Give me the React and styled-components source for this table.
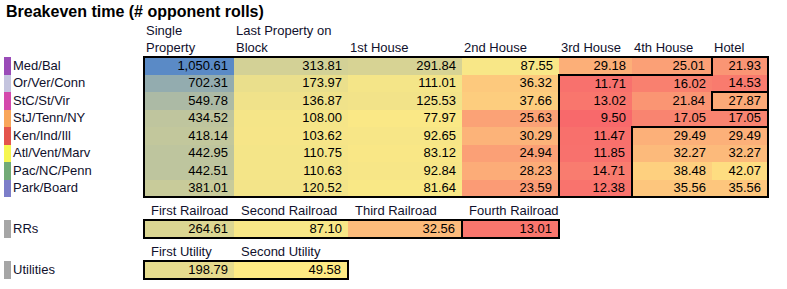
import React from 'react';
import styled, { createGlobalStyle } from 'styled-components';

const GlobalStyle = createGlobalStyle`
  html, body {
    margin: 0;
    padding: 0;
    background: #fff;
  }
  body {
    font-family: "Liberation Sans", Arial, sans-serif;
    font-size: 13px;
    color: #000;
  }
`;

const Sheet = styled.table`
  border-collapse: collapse;
  table-layout: fixed;
  width: 768px;
`;

const Col = styled.col`
  width: ${p => p.$w}px;
`;

const Row = styled.tr`
  height: ${p => p.$h}px;
`;

const TitleCell = styled.td`
  padding: 3px 0 0 6px;
  font-size: 16px;
  font-weight: bold;
  line-height: 18px;
  white-space: nowrap;
  vertical-align: top;
`;

const HeadCell = styled.td`
  padding: 0 0 0 ${p => p.$indent}px;
  line-height: 17px;
  vertical-align: bottom;
  white-space: nowrap;
  color: #10102c;
`;

const Blank = styled.td`
  padding: 0;
  line-height: 14px;
`;

const Swatch = styled.td`
  padding: 0;
  line-height: 14px;
  background: ${p => p.$color};
`;

const Label = styled.td`
  padding: 0 0 0 2px;
  line-height: 14px;
  white-space: nowrap;
  color: #10102c;
`;

const line = '2px solid #000';

const Num = styled.td`
  padding: 0 6px 0 0;
  text-align: right;
  line-height: 14px;
  white-space: nowrap;
  background: ${p => p.$bg};
  border-top: ${p => (p.$t ? line : 'none')};
  border-bottom: ${p => (p.$b ? line : 'none')};
  border-left: ${p => (p.$l ? line : 'none')};
  border-right: ${p => (p.$r ? line : 'none')};
`;

// Excel red - yellow - blue colour scale
const RED = [248, 105, 107];
const YEL = [255, 235, 132];
const BLUE = [90, 138, 198];
const MIN = 9.5;
const MID = 46;
const MAX = 1050.61;

const heat = v => {
  const [a, b, t] = v < MID
    ? [RED, YEL, (v - MIN) / (MID - MIN)]
    : [YEL, BLUE, (v - MID) / (MAX - MID)];
  const k = Math.max(0, Math.min(1, t));
  const c = a.map((x, i) => Math.round(x + (b[i] - x) * k));
  return `rgb(${c.join(',')})`;
};

const fmt = v => v.toLocaleString('en-US', { minimumFractionDigits: 2, maximumFractionDigits: 2 });

const widths = [4, 7, 133, 90, 114, 114, 97, 73, 80, 56];

const headers = [
  ['Single', 'Property'],
  ['Last Property on', 'Block'],
  ['1st House'],
  ['2nd House'],
  ['3rd House'],
  ['4th House'],
  ['Hotel'],
];

const groups = [
  { name: 'Med/Bal', color: '#9a4bb8', values: [1050.61, 313.81, 291.84, 87.55, 29.18, 25.01, 21.93] },
  { name: 'Or/Ver/Conn', color: '#c4c4de', values: [702.31, 173.97, 111.01, 36.32, 11.71, 16.02, 14.53] },
  { name: 'StC/St/Vir', color: '#d449ac', values: [549.78, 136.87, 125.53, 37.66, 13.02, 21.84, 27.87] },
  { name: 'StJ/Tenn/NY', color: '#f9a65a', values: [434.52, 108.0, 77.97, 25.63, 9.5, 17.05, 17.05] },
  { name: 'Ken/Ind/Ill', color: '#e4544c', values: [418.14, 103.62, 92.65, 30.29, 11.47, 29.49, 29.49] },
  { name: 'Atl/Vent/Marv', color: '#f6f650', values: [442.95, 110.75, 83.12, 24.94, 11.85, 32.27, 32.27] },
  { name: 'Pac/NC/Penn', color: '#72aa76', values: [442.51, 110.63, 92.84, 28.23, 14.71, 38.48, 42.07] },
  { name: 'Park/Board', color: '#7c7ec9', values: [381.01, 120.52, 81.64, 23.59, 12.38, 35.56, 35.56] },
];

const railroads = {
  name: 'RRs',
  heads: ['First Railroad', 'Second Railroad', 'Third Railroad', 'Fourth Railroad'],
  values: [264.61, 87.1, 32.56, 13.01],
};

const utilities = {
  name: 'Utilities',
  heads: ['First Utility', 'Second Utility'],
  values: [198.79, 49.58],
};

// which edges of a main-table cell carry the thick line
const edges = (r, c) => ({
  $t: r === 0 || (r === 2 && c === 6),
  $b: r === 7 || (r === 0 && (c === 4 || c === 5)) || (r === 2 && c === 6) || (r === 3 && c >= 5),
  $l: c === 0 || (c === 6 && (r === 0 || r === 2)) || (c === 4 && r >= 1) || (c === 5 && r >= 4),
  $r: c === 6,
});

const LeadCells = ({ color, name }) => (
  <>
    <Blank />
    {color ? <Swatch $color={color} /> : <Blank />}
    {name !== undefined ? <Label>{name}</Label> : <Blank />}
  </>
);

const SmallBlock = ({ block, headH, rowH, boxLast }) => {
  const n = block.values.length;
  const rest = 7 - n;
  return (
    <>
      <Row $h={headH}>
        <LeadCells />
        {block.heads.map(h => (
          <HeadCell key={h} $indent={7}>{h}</HeadCell>
        ))}
        {Array.from({ length: rest }, (_, i) => <Blank key={i} />)}
      </Row>
      <Row $h={rowH}>
        <LeadCells color="#a6a6a6" name={block.name} />
        {block.values.map((v, i) => (
          <Num
            key={i}
            $bg={heat(v)}
            $t
            $b
            $l={i === 0 || (boxLast && i === n - 1)}
            $r={i === n - 1}
          >
            {fmt(v)}
          </Num>
        ))}
        {Array.from({ length: rest }, (_, i) => <Blank key={i} />)}
      </Row>
    </>
  );
};

export default function App() {
  return (
    <>
      <GlobalStyle />
      <Sheet>
        <colgroup>
          {widths.map((w, i) => <Col key={i} $w={w} />)}
        </colgroup>
        <tbody>
          <Row $h={21}>
            <TitleCell colSpan={10}>Breakeven time (# opponent rolls)</TitleCell>
          </Row>
          <Row $h={36}>
            <LeadCells />
            {headers.map((h, i) => (
              <HeadCell key={i} $indent={2}>
                {h.map((part, j) => (
                  <React.Fragment key={j}>
                    {j > 0 && <br />}
                    {part}
                  </React.Fragment>
                ))}
              </HeadCell>
            ))}
          </Row>
          {groups.map((g, r) => (
            <Row key={g.name} $h={17.5}>
              <LeadCells color={g.color} name={g.name} />
              {g.values.map((v, c) => (
                <Num key={c} $bg={heat(v)} {...edges(r, c)}>{fmt(v)}</Num>
              ))}
            </Row>
          ))}
          <SmallBlock block={railroads} headH={23} rowH={18} boxLast />
          <SmallBlock block={utilities} headH={23} rowH={17.5} />
        </tbody>
      </Sheet>
    </>
  );
}
